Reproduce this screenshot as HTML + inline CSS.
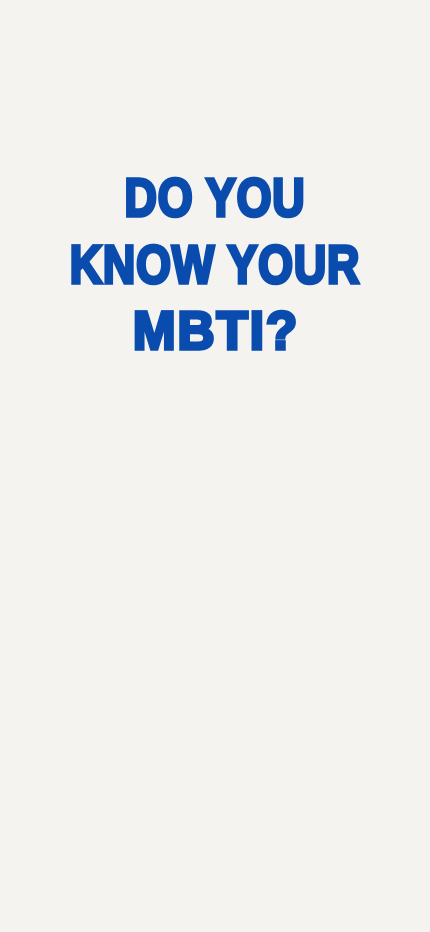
<!DOCTYPE html>
<html><head><meta charset="utf-8"><style>
html,body{margin:0;padding:0;width:430px;height:932px;background:#f4f3ef;overflow:hidden}
.l{position:absolute;left:0;width:430px;text-align:center;font-family:"Liberation Sans",sans-serif;font-weight:bold;font-size:54px;line-height:54px;color:#0a4cad;-webkit-text-stroke:3.5px #0a4cad;transform:scaleX(0.83);letter-spacing:1px}
</style></head><body>
<div class="l" style="top:171px">DO YOU</div>
<div class="l" style="top:238px">KNOW YOUR</div>
<div class="l" style="top:304px;letter-spacing:2px;transform:scaleX(0.95);left:1px">MBTI?</div>
</body></html>
